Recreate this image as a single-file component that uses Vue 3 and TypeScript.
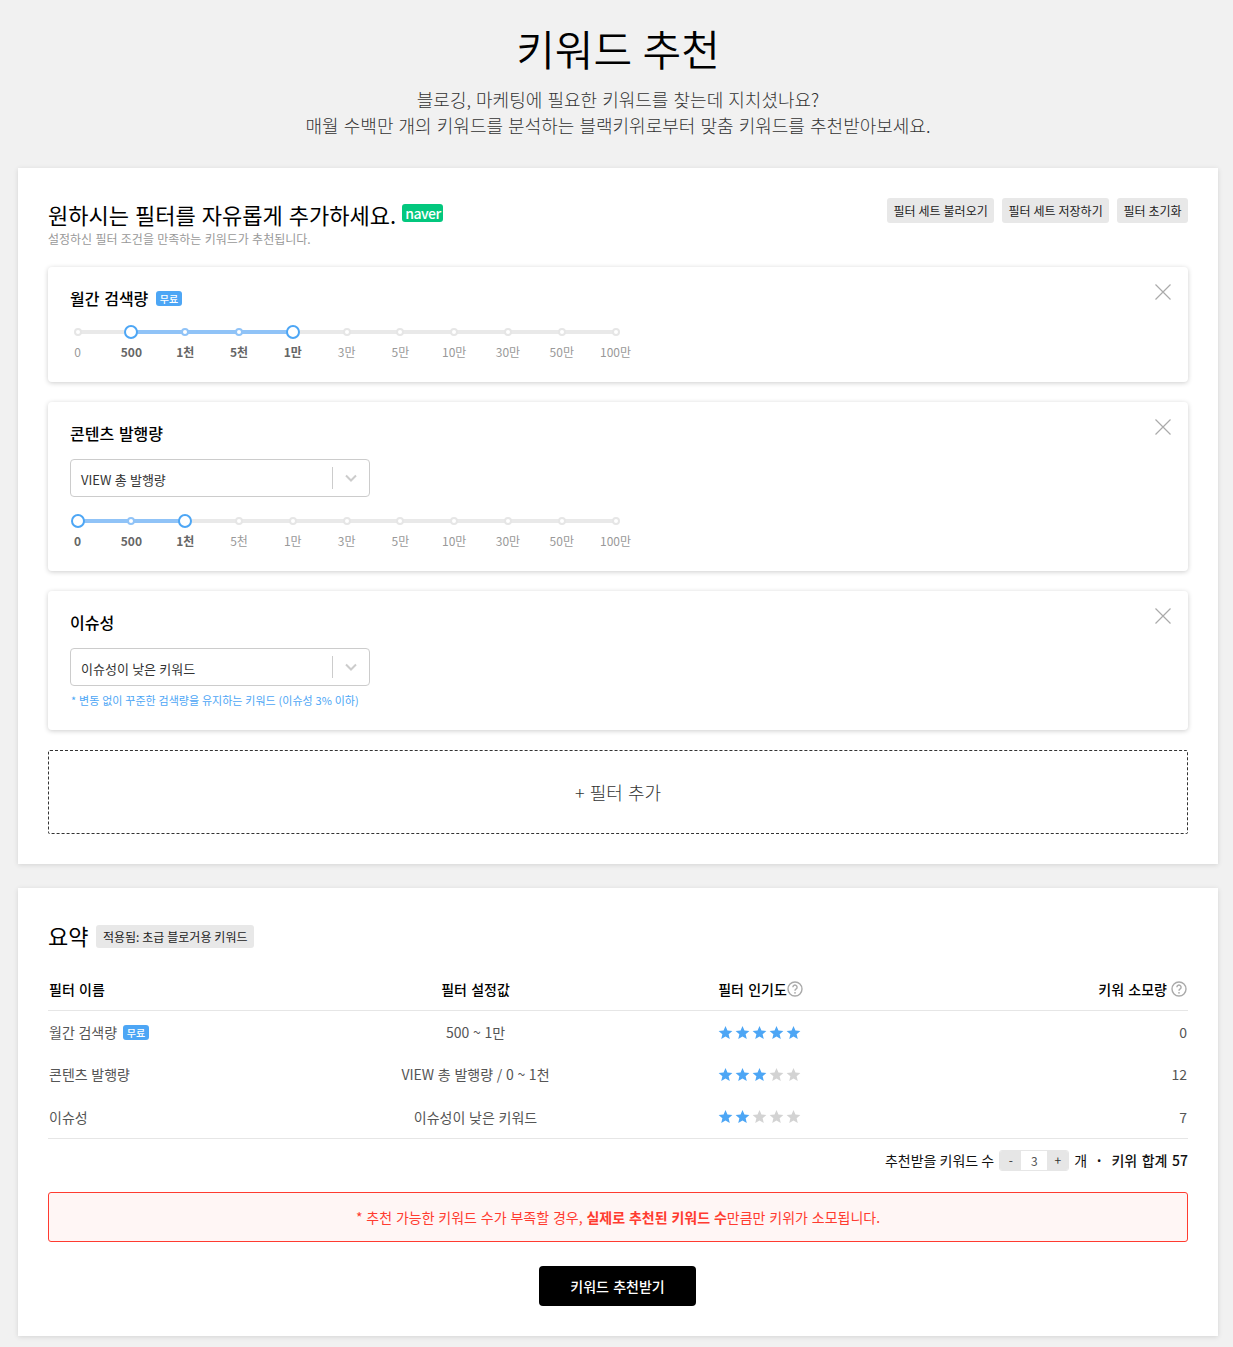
<script setup lang="ts">
interface Tick { label: string; state: 'off' | 'mid' | 'end' }

const labels = ['0', '500', '1천', '5천', '1만', '3만', '5만', '10만', '30만', '50만', '100만']
const STEP = 53.8

function ticks(from: number, to: number): Tick[] {
  return labels.map((label, i) => ({
    label,
    state: i === from || i === to ? 'end' : i > from && i < to ? 'mid' : 'off',
  }))
}

function fill(from: number, to: number) {
  return { left: `${from * STEP + 26.9}px`, width: `${(to - from) * STEP}px` }
}

const rows = [
  { name: '월간 검색량', free: true, value: '500 ~ 1만', stars: 5, cost: 0 },
  { name: '콘텐츠 발행량', free: false, value: 'VIEW 총 발행량 / 0 ~ 1천', stars: 3, cost: 12 },
  { name: '이슈성', free: false, value: '이슈성이 낮은 키워드', stars: 2, cost: 7 },
]
</script>

<template>
  <div class="page">
    <header class="hero">
      <h1>키워드 추천</h1>
      <p>블로깅, 마케팅에 필요한 키워드를 찾는데 지치셨나요?<br />매월 수백만 개의 키워드를 분석하는 블랙키위로부터 맞춤 키워드를 추천받아보세요.</p>
    </header>

    <section class="panel filters">
      <div class="panel-head">
        <div>
          <h2>원하시는 필터를 자유롭게 추가하세요. <span class="naver">naver</span></h2>
          <p class="hint">설정하신 필터 조건을 만족하는 키워드가 추천됩니다.</p>
        </div>
        <div class="actions">
          <button class="chip">필터 세트 불러오기</button>
          <button class="chip">필터 세트 저장하기</button>
          <button class="chip">필터 초기화</button>
        </div>
      </div>

      <div class="filter-card">
        <svg class="close" viewBox="0 0 16 16"><path d="M.5.5l15 15M15.500.5l-15 15" /></svg>
        <h3>월간 검색량 <span class="free">무료</span></h3>
        <div class="slider">
          <div class="track"></div>
          <div class="track-fill" :style="fill(1, 4)"></div>
          <div class="ticks">
            <div v-for="t in ticks(1, 4)" :key="t.label" class="tick" :class="t.state">
              <span class="dot"></span><span class="tick-label">{{ t.label }}</span>
            </div>
          </div>
        </div>
      </div>

      <div class="filter-card">
        <svg class="close" viewBox="0 0 16 16"><path d="M.5.5l15 15M15.500.5l-15 15" /></svg>
        <h3>콘텐츠 발행량</h3>
        <div class="select">
          <span class="select-text">VIEW 총 발행량</span>
          <span class="select-arrow"><svg viewBox="0 0 12 8"><path d="M1 1.500l5 5 5-5" /></svg></span>
        </div>
        <div class="slider after-select">
          <div class="track"></div>
          <div class="track-fill" :style="fill(0, 2)"></div>
          <div class="ticks">
            <div v-for="t in ticks(0, 2)" :key="t.label" class="tick" :class="t.state">
              <span class="dot"></span><span class="tick-label">{{ t.label }}</span>
            </div>
          </div>
        </div>
      </div>

      <div class="filter-card">
        <svg class="close" viewBox="0 0 16 16"><path d="M.5.5l15 15M15.500.5l-15 15" /></svg>
        <h3>이슈성</h3>
        <div class="select">
          <span class="select-text">이슈성이 낮은 키워드</span>
          <span class="select-arrow"><svg viewBox="0 0 12 8"><path d="M1 1.500l5 5 5-5" /></svg></span>
        </div>
        <p class="note">* 변동 없이 꾸준한 검색량을 유지하는 키워드 (이슈성 3% 이하)</p>
      </div>

      <button class="add">+ 필터 추가</button>
    </section>

    <section class="panel summary">
      <div class="summary-head">
        <h2>요약</h2>
        <span class="chip applied">적용됨: 초급 블로거용 키워드</span>
      </div>

      <div class="table">
        <div class="row head">
          <div class="c-name">필터 이름</div>
          <div class="c-value">필터 설정값</div>
          <div class="c-pop">필터 인기도<svg class="help" viewBox="0 0 16 16"><circle cx="8" cy="8" r="7" /><path d="M5.900 6.200a2.100 2.100 0 1 1 3.300 1.700c-.8.5-1.200.9-1.200 1.800" /><circle class="help-dot" cx="8" cy="11.800" r=".9" /></svg></div>
          <div class="c-cost">키워 소모량 <svg class="help" viewBox="0 0 16 16"><circle cx="8" cy="8" r="7" /><path d="M5.900 6.200a2.100 2.100 0 1 1 3.300 1.700c-.8.5-1.200.9-1.200 1.800" /><circle class="help-dot" cx="8" cy="11.800" r=".9" /></svg></div>
        </div>
        <div v-for="r in rows" :key="r.name" class="row body">
          <div class="c-name">{{ r.name }} <span v-if="r.free" class="free">무료</span></div>
          <div class="c-value">{{ r.value }}</div>
          <div class="c-pop stars">
            <svg v-for="n in 5" :key="n" class="star" :class="{ on: n <= r.stars }" viewBox="0 0 24 24"><path d="M12 1.500l3.100 7.200 7.900.7-6 5.200 1.800 7.700L12 18.200l-6.800 4.100L7 14.600l-6-5.200 7.900-.7z" /></svg>
          </div>
          <div class="c-cost">{{ r.cost }}</div>
        </div>
      </div>

      <div class="count-row">
        <span>추천받을 키워드 수</span>
        <span class="stepper"><button>-</button><span class="step-value">3</span><button>+</button></span>
        <span>개</span>
        <span class="sep">·</span>
        <strong>키위 합계 57</strong>
      </div>

      <div class="alert">* 추천 가능한 키워드 수가 부족할 경우, <strong>실제로 추천된 키워드 수</strong>만큼만 키위가 소모됩니다.</div>

      <div class="submit-wrap"><button class="submit">키워드 추천받기</button></div>
    </section>
  </div>
</template>

<style>
html, body { margin: 0; background: #f1f1f1; }
</style>

<style scoped>
.page {
  width: 1200px;
  margin-left: 18px;
  padding-bottom: 11px;
  font-family: "Noto Sans CJK KR", "Noto Sans", sans-serif;
  word-spacing: .07em;
  color: #000;
}
h1, h2, h3, p { margin: 0; font-weight: 400; }
button { font-family: inherit; word-spacing: inherit; border: 0; cursor: pointer; }

.hero { height: 168px; text-align: center; box-sizing: border-box; padding-top: 18px; }
.hero h1 { font-size: 42px; line-height: 60px; font-weight: 350; }
.hero p { margin-top: 8px; font-size: 18px; line-height: 26px; color: #333; font-weight: 300; }

.panel { background: #fff; box-shadow: 0 1px 5px rgba(0, 0, 0, .12); padding: 30px; }
.filters { height: 696px; box-sizing: border-box; }

.panel-head { display: flex; justify-content: space-between; align-items: flex-start; height: 69px; }
.panel-head h2 { font-size: 22px; line-height: 34px; margin-top: -1px; height: 34px; }
.naver {
  display: inline-block;
  background: #03c77e;
  color: #fff;
  font-size: 14px;
  font-weight: 500;
  line-height: 18px;
  letter-spacing: -.5px;
  padding: 0 2px 0 3px;
  border-radius: 3px;
  vertical-align: 5px;
}
.hint { font-size: 12px; line-height: 18px; color: #999; margin-top: -1px; word-spacing: .05em; }

.actions { display: flex; gap: 8px; }
.chip {
  display: inline-block;
  background: #e8e8e8;
  border-radius: 3px;
  color: #222;
  font-size: 12px;
  line-height: 25px;
  height: 25px;
  padding: 0 6.400px;
  word-spacing: .02em;
}

.filter-card {
  position: relative;
  background: #fff;
  border-radius: 4px;
  box-shadow: 0 1px 5px rgba(0, 0, 0, .2);
  padding: 22px;
  margin-bottom: 20px;
  box-sizing: border-box;
}
.filter-card h3 { display: flex; align-items: center; gap: 4px; margin: -1px 0 1px; font-size: 16px; font-weight: 500; line-height: 20px; }
.filter-card:nth-of-type(2) { height: 115px; }
.filter-card:nth-of-type(3) { height: 169px; }
.filter-card:nth-of-type(4) { height: 139px; }

.close { position: absolute; top: 17px; right: 17px; width: 16px; height: 16px; fill: none; stroke: #aaa; stroke-width: 1.200; }

.free {
  display: inline-block;
  background: #4da6f5;
  color: #fff;
  font-size: 10px;
  font-weight: 500;
  line-height: 15px;
  padding: 0 3.500px;
  border-radius: 3px;
  margin-left: 4px;
  vertical-align: 1px;
  word-spacing: 0;
}
.row .free { margin-left: 2px; padding: 0 4px; }

.slider { position: relative; width: 592px; margin: 13px 0 0 -19.300px; }
.slider.after-select { margin-top: 13px; }
.track { position: absolute; top: 9px; left: 26.900px; width: 538px; height: 4px; background: #e9e9e9; }
.track-fill { position: absolute; top: 9px; height: 4px; background: #90c3f7; }
.ticks { position: relative; display: grid; grid-template-columns: repeat(11, 53.800px); }
.tick { display: flex; flex-direction: column; align-items: center; }
.dot {
  box-sizing: border-box;
  width: 8px;
  height: 8px;
  margin: 7px 0;
  border-radius: 50%;
  background: #fff;
  border: 2px solid #e6e6e6;
}
.tick.mid .dot { border-color: #90c3f7; }
.tick.end .dot { width: 14px; height: 14px; margin: 4px 0; border-color: #4da6f5; }
.tick-label { margin-top: 0; font-size: 12px; line-height: 18px; color: #999; white-space: nowrap; }
.tick.mid .tick-label, .tick.end .tick-label { color: #666; font-weight: 700; }

.select {
  display: flex;
  align-items: center;
  justify-content: space-between;
  box-sizing: border-box;
  width: 300px;
  height: 38px;
  margin-top: 16px;
  padding-left: 10px;
  background: #fff;
  border: 1px solid #ccc;
  border-radius: 4px;
  font-size: 13px;
  color: #333;
  word-spacing: .03em;
}
.select-text { padding-top: 2px; }
.select-arrow {
  display: flex;
  align-items: center;
  justify-content: center;
  width: 36px;
  height: 22px;
  border-left: 1px solid #ccc;
}
.select-arrow svg { width: 12px; height: 8px; fill: none; stroke: #ccc; stroke-width: 2; }
.note { margin-top: 5px; font-size: 11px; line-height: 18px; color: #4da6f5; word-spacing: .04em; padding-left: 1px; }

.add {
  display: block;
  width: 100%;
  height: 84px;
  background: #fff;
  border: 1px dashed #333;
  border-radius: 2px;
  font-size: 18px;
  font-weight: 300;
  color: #333;
}

.summary { margin-top: 24px; height: 448px; box-sizing: border-box; }
.summary-head { display: flex; align-items: center; gap: 8px; height: 36px; }
.summary-head h2 { font-size: 22px; line-height: 36px; margin-top: -3px; }
.applied { height: 23px; line-height: 23px; }

.table { margin-top: 16px; }
.row { display: grid; grid-template-columns: repeat(4, 285px); align-items: center; font-size: 14px; }
.row.head { height: 38px; padding-bottom: 2px; border-bottom: 1px solid #e6e6e6; font-weight: 500; box-sizing: content-box; }
.row.body { height: 42.300px; color: #555; word-spacing: .04em; }
.c-name { padding-left: 1px; }
.c-value { text-align: center; }
.c-pop { display: flex; justify-content: center; align-items: center; }
.c-cost { display: flex; justify-content: flex-end; align-items: center; gap: 4px; padding-right: 1px; }
.table .row.body:last-child { border-bottom: 1px solid #e6e6e6; }
.help { width: 16px; height: 16px; fill: none; stroke: #aaa; stroke-width: 1.400; }
.help-dot { fill: #aaa; stroke: none; }
.stars { gap: 2px; margin-left: -2px; }
.star { width: 15px; height: 15px; fill: #d3d3d3; }
.star.on { fill: #4da6f5; }

.count-row { display: flex; justify-content: flex-end; align-items: center; gap: 5px; height: 43px; font-size: 14px; color: #111; word-spacing: 0; }
.count-row strong { font-weight: 500; word-spacing: .1em; }
.sep { margin: 0 3px; font-weight: 700; }
.stepper {
  display: flex;
  height: 21px;
  width: 70px;
  border: 1px solid #e6e6e6;
  border-radius: 3px;
  overflow: hidden;
  font-size: 12px;
  box-sizing: border-box;
}
.stepper button { width: 21px; height: 100%; background: #e6e6e6; padding: 0; color: #333; font-size: 12px; line-height: 18px; }
.step-value { flex: 1; text-align: center; line-height: 19px; color: #555; background: #fff; }

.alert {
  box-sizing: border-box;
  height: 50px;
  margin-top: 10px;
  border: 1px solid #ff3b30;
  border-radius: 3px;
  background: #fff6f5;
  color: #ff3b30;
  font-size: 14px;
  line-height: 48px;
  text-align: center;
  word-spacing: .05em;
}
.alert strong { font-weight: 700; }

.submit-wrap { display: flex; justify-content: center; margin-top: 24px; padding-right: 1px; }
.submit {
  width: 157px;
  height: 40px;
  background: #000;
  color: #fff;
  border-radius: 4px;
  font-size: 14px;
  font-weight: 500;
}
</style>
